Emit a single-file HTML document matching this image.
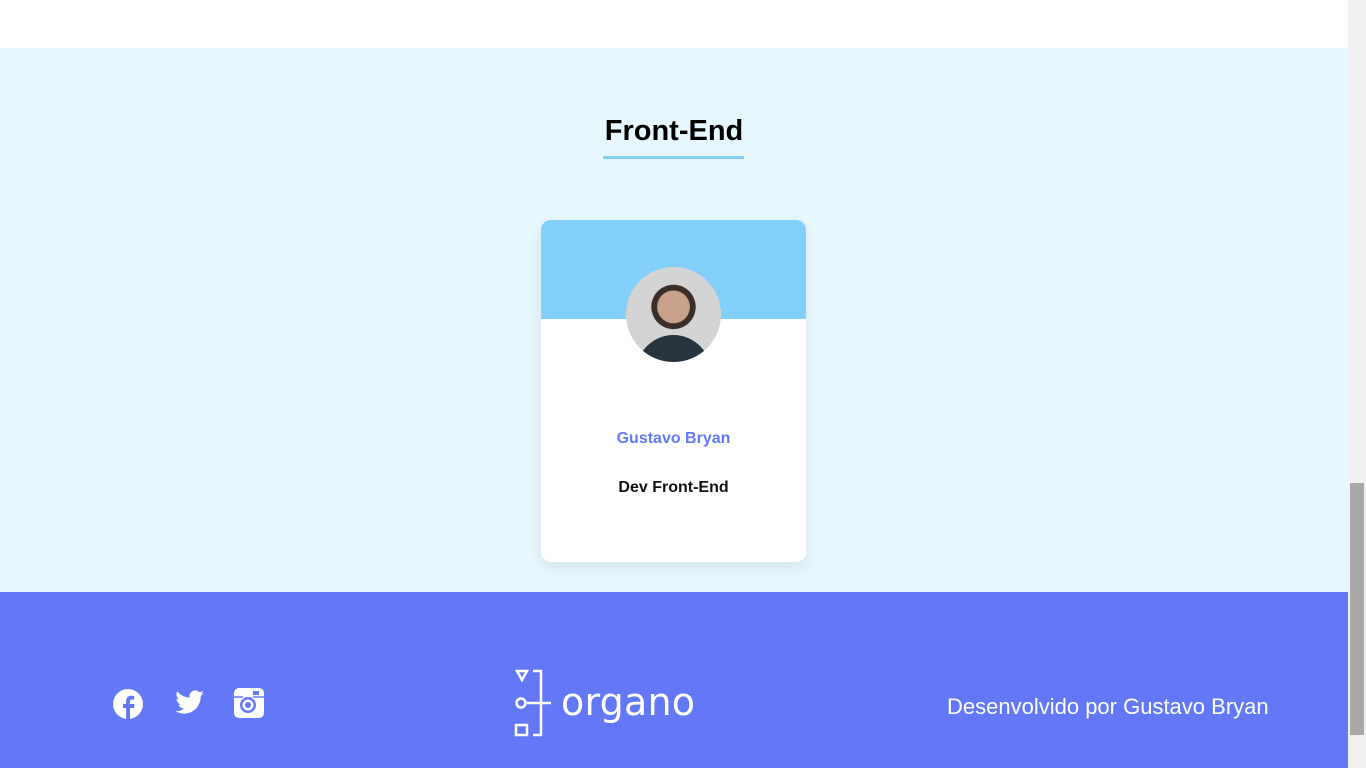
<!DOCTYPE html>
<html><head><style>
body{margin:0;width:1366px;height:768px;overflow:hidden;font-family:"Liberation Sans",sans-serif;background:#fff;position:relative}
.sec{position:absolute;left:0;top:48px;width:1348px;height:544px;background:#e6f7fe}
.title{position:absolute;left:0;width:1348px;top:115px;text-align:center;font-size:29px;font-weight:bold;color:#000}
.ul{position:absolute;left:603px;top:156px;width:141px;height:3px;background:#82cffa}
.card{position:absolute;left:541px;top:220px;width:265px;height:342px;background:#fff;border-radius:10px;box-shadow:0 6px 14px rgba(0,0,0,.08);overflow:hidden}
.card .top{height:99px;background:#82cffa}
.av{position:absolute;left:85px;top:47px;width:95px;height:95px;border-radius:50%;background:radial-gradient(circle at 50% 42%,#c9a08a 0 22%,#3b2e28 23% 30%,#d4d4d4 31%);overflow:hidden}
.av:after{content:"";position:absolute;left:10px;top:68px;width:75px;height:40px;border-radius:40px 40px 0 0;background:#27333f}
.name{position:absolute;left:0;width:265px;top:210px;text-align:center;color:#6278f7;font-weight:bold;font-size:16px}
.role{position:absolute;left:0;width:265px;top:259px;text-align:center;color:#111;font-weight:bold;font-size:16px}
.foot{position:absolute;left:0;top:592px;width:1348px;height:176px;background:#6278f7}
.dev{position:absolute;left:947px;top:694px;color:#fff;font-size:22px}
.sb{position:absolute;left:1348px;top:0;width:18px;height:768px;background:#f1f1f1}
.th{position:absolute;left:1350px;top:483px;width:14px;height:252px;background:#a8a8a8}
</style></head><body>
<div class="sec"></div>
<div class="title">Front-End</div>
<div class="ul"></div>
<div class="card"><div class="top"></div><div class="av"></div>
<div class="name">Gustavo Bryan</div><div class="role">Dev Front-End</div></div>
<div class="foot"></div>
<svg style="position:absolute;left:0;top:0" width="1348" height="768">
<circle cx="128" cy="704" r="15" fill="#fff"/>
<path d="M130 719v-11h4l.6-4H130v-2.5c0-1.2.4-2 2-2h2.3v-3.5c-.5 0-1.8-.2-3.2-.2-3 0-5 1.8-5 5.2v3H123v4h3.1v11z" fill="#6278f7"/>
<path d="M204 693c-1.1.5-2.2.8-3.4 1 1.2-.7 2.1-1.9 2.6-3.2-1.1.7-2.4 1.1-3.7 1.4a5.9 5.9 0 0 0-10 5.4c-4.9-.2-9.3-2.6-12.2-6.2-1.6 2.7-.7 6.1 1.8 7.9-.9 0-1.8-.3-2.6-.7 0 2.9 2 5.3 4.7 5.8-.9.2-1.8.3-2.7.1.8 2.4 3 4 5.5 4.1A11.8 11.8 0 0 1 175 711c2.6 1.700 5.8 2.600 9 2.600 10.900 0 17-9.200 16.700-17.600 1.200-.800 2.200-1.900 3-3z" fill="#fff"/>
<rect x="234" y="688" width="30" height="30" rx="5" fill="#fff"/>
<rect x="237" y="697" width="24" height="18" rx="2" fill="#6278f7" opacity="0"/>
<circle cx="248" cy="705" r="8" fill="#6278f7"/><circle cx="248" cy="705" r="5.5" fill="#fff"/><circle cx="248" cy="705" r="3" fill="#6278f7"/>
<rect x="253" y="691" width="6" height="4" fill="#6278f7"/>
<path d="M234 697h9M253 697h11" stroke="#6278f7" stroke-width="1.5"/>
<g stroke="#fff" stroke-width="2.5" fill="none">
<path d="M517 671h10l-5 9z"/>
<path d="M533 671h8v64h-8M527 703h24"/>
<circle cx="521" cy="703" r="4.5"/>
<rect x="516" y="725" width="11" height="10"/>
</g>
<text x="561" y="715" fill="#fff" font-size="38" font-family="DejaVu Sans, Liberation Sans, sans-serif" letter-spacing="0" textLength="134">organo</text>
</svg>
<div class="dev">Desenvolvido por Gustavo Bryan</div>
<div class="sb"></div><div class="th"></div>
</body></html>
